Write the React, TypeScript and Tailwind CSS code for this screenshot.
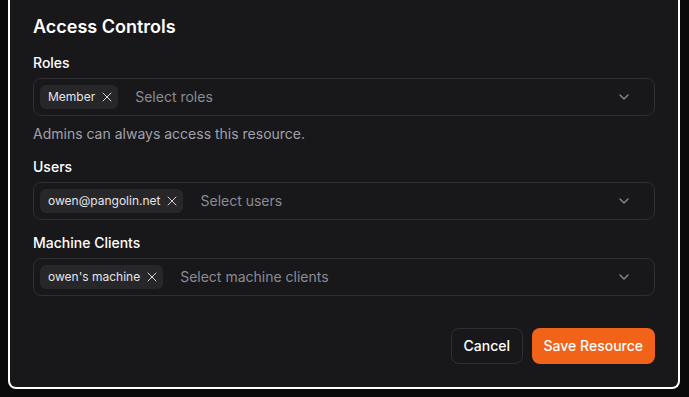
import { ChevronDown, X } from 'lucide-react'

const FIELDS = [
  { label: 'Roles', chip: 'Member', placeholder: 'Select roles', hint: 'Admins can always access this resource.' },
  { label: 'Users', chip: 'owen@pangolin.net', placeholder: 'Select users' },
  { label: 'Machine Clients', chip: "owen's machine", placeholder: 'Select machine clients' },
]

export default function App() {
  return (
    <div className="w-[689px] h-[397px] overflow-hidden bg-[#0a0a0a] px-2 font-['Inter',sans-serif] text-white">
      <div className="w-[672px] rounded-b-lg border-2 border-t-0 border-white bg-[#18181b] px-[23px] pt-[13px] pb-[23px]">
        <h2 className="text-lg leading-7 font-semibold">Access Controls</h2>

        <div className="mt-[12px] flex flex-col gap-[13px]">
          {FIELDS.map(f => (
            <div key={f.label} className="flex flex-col">
              <label className="text-sm leading-5 font-medium">{f.label}</label>
              <div className="mt-[5px] flex h-[38px] items-center rounded-lg border border-[#2e2e33] pl-[6px] pr-[22px]">
                <span className="flex h-6 items-center gap-1 rounded-md bg-[#27272a] pl-2 pr-[3px] text-xs text-[#e4e4e7]">
                  {f.chip}
                  <X size={16} strokeWidth={1.5} className="text-[#d4d4d8]" />
                </span>
                <span className="ml-[17px] flex-1 text-sm text-[#8b8b93]">{f.placeholder}</span>
                <ChevronDown size={16} className="text-[#8b8b93]" />
              </div>
              {f.hint && <p className="mt-[8px] text-sm leading-5 text-[#a1a1aa]">{f.hint}</p>}
            </div>
          ))}
        </div>

        {/* Footer */}
        <div className="mt-[32px] flex justify-end gap-[9px]">
          <button className="h-9 rounded-lg border border-[#2e2e33] px-[11.5px] text-sm font-medium">Cancel</button>
          <button className="h-9 rounded-lg bg-[#f2631a] px-3 text-sm font-medium">Save Resource</button>
        </div>
      </div>
    </div>
  )
}
